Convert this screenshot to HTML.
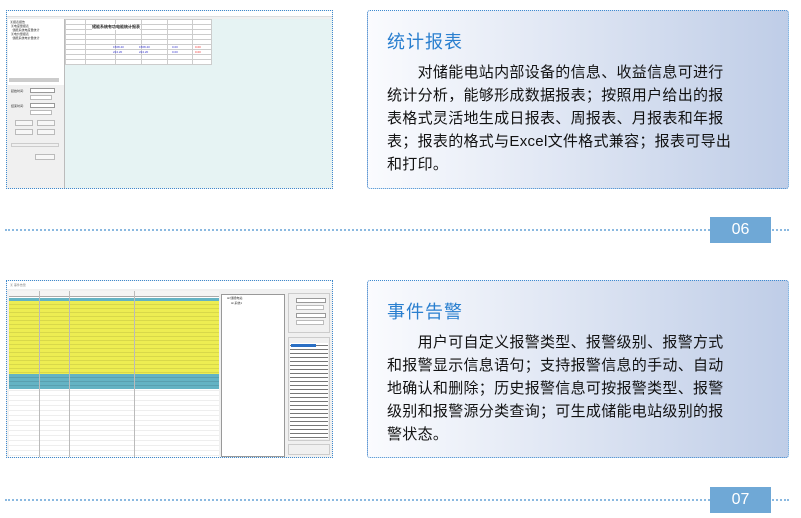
<!DOCTYPE html>
<html><head><meta charset="utf-8"><style>
*{margin:0;padding:0;box-sizing:border-box}
body{width:801px;height:518px;background:#fff;position:relative;overflow:hidden;font-family:"Liberation Sans","Noto Sans CJK SC",sans-serif}
.abs{position:absolute}
.shot{border:1px dotted #3d8ad0}
.box{border:1px dotted #3d8ad0;border-radius:3px;background:linear-gradient(90deg,#fafbfe 0%,#e3e9f5 40%,#bfcde7 100%)}
.box h2{position:absolute;left:19px;font-weight:normal;font-size:18px;color:#2a7fcf;letter-spacing:1px}
.box p{position:absolute;left:19px;width:400px;font-size:15px;line-height:23px;letter-spacing:0.3px;color:#111;white-space:nowrap}
.dl{border-top:2px dotted #8bb9e0;height:0}
.num{background:#6fa8d6;color:#fff;font-size:16px;text-align:center;line-height:26px}
.t{font-size:3px;color:#333;white-space:nowrap}
</style></head><body>

<!-- screenshot 1 -->
<div class="abs shot" style="left:6px;top:10px;width:327px;height:179px;background:#f0f0f0">
  <div class="abs" style="left:0;top:0;width:325px;height:6px;background:#fff;border-bottom:1px solid #ddd"></div>
  <div class="abs" style="left:1px;top:8px;width:56px;height:66px;background:#fff"></div>
  <div class="abs t" style="left:3px;top:9px;line-height:4px">▣报表报告<br>&nbsp;▣电度量报表<br>&nbsp;&nbsp;&nbsp;储能系统电度量统计<br>&nbsp;▣电价量报表<br>&nbsp;&nbsp;&nbsp;储能系统电价量统计</div>
  <div class="abs" style="left:2px;top:67px;width:50px;height:4px;background:#ccc"></div>
  <div class="abs" style="left:23px;top:77px;width:25px;height:5px;background:#fff;border:1px solid #999"></div>
  <div class="abs" style="left:23px;top:84px;width:22px;height:5px;background:#fff;border:1px solid #bbb"></div>
  <div class="abs" style="left:23px;top:92px;width:25px;height:5px;background:#fff;border:1px solid #999"></div>
  <div class="abs" style="left:23px;top:99px;width:22px;height:5px;background:#fff;border:1px solid #bbb"></div>
  <div class="abs t" style="left:4px;top:78px">起始时间:</div>
  <div class="abs t" style="left:4px;top:93px">结束时间:</div>
  <div class="abs" style="left:8px;top:109px;width:18px;height:6px;border:1px solid #bbb;background:#f7f7f7"></div>
  <div class="abs" style="left:30px;top:109px;width:18px;height:6px;border:1px solid #bbb;background:#f7f7f7"></div>
  <div class="abs" style="left:8px;top:118px;width:18px;height:6px;border:1px solid #bbb;background:#f7f7f7"></div>
  <div class="abs" style="left:30px;top:118px;width:18px;height:6px;border:1px solid #bbb;background:#f7f7f7"></div>
  <div class="abs" style="left:4px;top:132px;width:48px;height:4px;border:1px solid #ccc"></div>
  <div class="abs" style="left:28px;top:143px;width:20px;height:6px;border:1px solid #bbb;background:#f7f7f7"></div>
  <div class="abs" style="left:57px;top:8px;width:268px;height:169px;background:#e6f3f3;border-left:1px solid #bbb"></div>
  <div class="abs" style="left:58px;top:8px;width:147px;height:46px;background:#fff;border:1px solid #ccc;
    background-image:repeating-linear-gradient(180deg,transparent 0 4px,#ccc 4px 5px),linear-gradient(90deg,transparent 0 19px,#ccc 19px 20px,transparent 20px 49px,#ccc 49px 50px,transparent 50px 75px,#ccc 75px 76px,transparent 76px 101px,#ccc 101px 102px,transparent 102px 126px,#ccc 126px 127px,transparent 127px)"></div>
  <div class="abs t" style="left:85px;top:13px;font-size:4px;font-weight:bold;background:#fff;color:#222">储能系统有功电能统计报表</div>
  <div class="abs t" style="left:106px;top:34px;color:#33c">1568.40</div>
  <div class="abs t" style="left:132px;top:34px;color:#33c">1568.40</div>
  <div class="abs t" style="left:165px;top:34px;color:#33c">0.00</div>
  <div class="abs t" style="left:188px;top:34px;color:#e33">0.00</div>
  <div class="abs t" style="left:106px;top:39px;color:#33c">224.20</div>
  <div class="abs t" style="left:132px;top:39px;color:#33c">224.20</div>
  <div class="abs t" style="left:165px;top:39px;color:#33c">0.00</div>
  <div class="abs t" style="left:188px;top:39px;color:#e33">0.00</div>
</div>

<div class="abs box" style="left:367px;top:10px;width:422px;height:179px">
  <h2 style="top:17px">统计报表</h2>
  <p style="top:50px">&emsp;&emsp;对储能电站内部设备的信息、收益信息可进行<br>统计分析，能够形成数据报表；按照用户给出的报<br>表格式灵活地生成日报表、周报表、月报表和年报<br>表；报表的格式与Excel文件格式兼容；报表可导出<br>和打印。</p>
</div>
<div class="abs dl" style="left:5px;top:229px;width:784px"></div>
<div class="abs num" style="left:710px;top:217px;width:61px;height:26px">06</div>

<!-- screenshot 2 -->
<div class="abs shot" style="left:6px;top:280px;width:327px;height:178px;background:#f0f0f0">
  <div class="abs" style="left:0;top:0;width:325px;height:8px;background:#fff"></div>
  <div class="abs t" style="left:3px;top:2px;color:#888">▣ 事件告警</div>
  <div class="abs" style="left:2px;top:10px;width:210px;height:166px;background:#fff;
    background-image:repeating-linear-gradient(180deg,transparent 0 4px,#eee 4px 5px)"></div>
  <div class="abs" style="left:2px;top:10px;width:210px;height:6px;background:#f4f4f4;border-bottom:1px solid #aaa"></div>
  <div class="abs" style="left:2px;top:17px;width:210px;height:3px;background:#64b3c4"></div>
  <div class="abs" style="left:2px;top:20px;width:210px;height:73px;background:#eded52;
    background-image:repeating-linear-gradient(180deg,transparent 0 3px,#d8d84a 3px 4px)"></div>
  <div class="abs" style="left:2px;top:93px;width:210px;height:15px;background:#64b3c4;
    background-image:repeating-linear-gradient(180deg,transparent 0 3px,#5aa0b0 3px 4px)"></div>
  <div class="abs" style="left:2px;top:10px;width:210px;height:166px;
    background:linear-gradient(90deg,transparent 0 30px,#bbb 30px 31px,transparent 31px 60px,#bbb 60px 61px,transparent 61px 125px,#bbb 125px 126px,transparent 126px)"></div>
  <div class="abs" style="left:214px;top:13px;width:64px;height:163px;background:#fff;border:1px solid #999"></div>
  <div class="abs t" style="left:220px;top:15px">⊞ 储能电站</div>
  <div class="abs t" style="left:224px;top:20px">⊞ 系统1</div>
  <div class="abs" style="left:281px;top:12px;width:42px;height:40px;border:1px solid #ccc"></div>
  <div class="abs" style="left:289px;top:17px;width:30px;height:5px;background:#fff;border:1px solid #999"></div>
  <div class="abs" style="left:289px;top:24px;width:28px;height:5px;background:#fff;border:1px solid #bbb"></div>
  <div class="abs" style="left:289px;top:32px;width:30px;height:5px;background:#fff;border:1px solid #999"></div>
  <div class="abs" style="left:289px;top:39px;width:28px;height:5px;background:#fff;border:1px solid #bbb"></div>
  <div class="abs" style="left:281px;top:56px;width:42px;height:104px;border:1px solid #ccc"></div>
  <div class="abs" style="left:283px;top:62px;width:38px;height:96px;background:#fff;
    background-image:repeating-linear-gradient(180deg,transparent 0 2px,#777 2px 3px,transparent 3px 4px)"></div>
  <div class="abs" style="left:284px;top:63px;width:25px;height:3px;background:#2a6fc4"></div>
  <div class="abs" style="left:281px;top:163px;width:42px;height:11px;border:1px solid #ccc"></div>
</div>

<div class="abs box" style="left:367px;top:280px;width:422px;height:178px">
  <h2 style="top:17px">事件告警</h2>
  <p style="top:50px">&emsp;&emsp;用户可自定义报警类型、报警级别、报警方式<br>和报警显示信息语句；支持报警信息的手动、自动<br>地确认和删除；历史报警信息可按报警类型、报警<br>级别和报警源分类查询；可生成储能电站级别的报<br>警状态。</p>
</div>
<div class="abs dl" style="left:5px;top:499px;width:784px"></div>
<div class="abs num" style="left:710px;top:487px;width:61px;height:26px">07</div>
</body></html>
